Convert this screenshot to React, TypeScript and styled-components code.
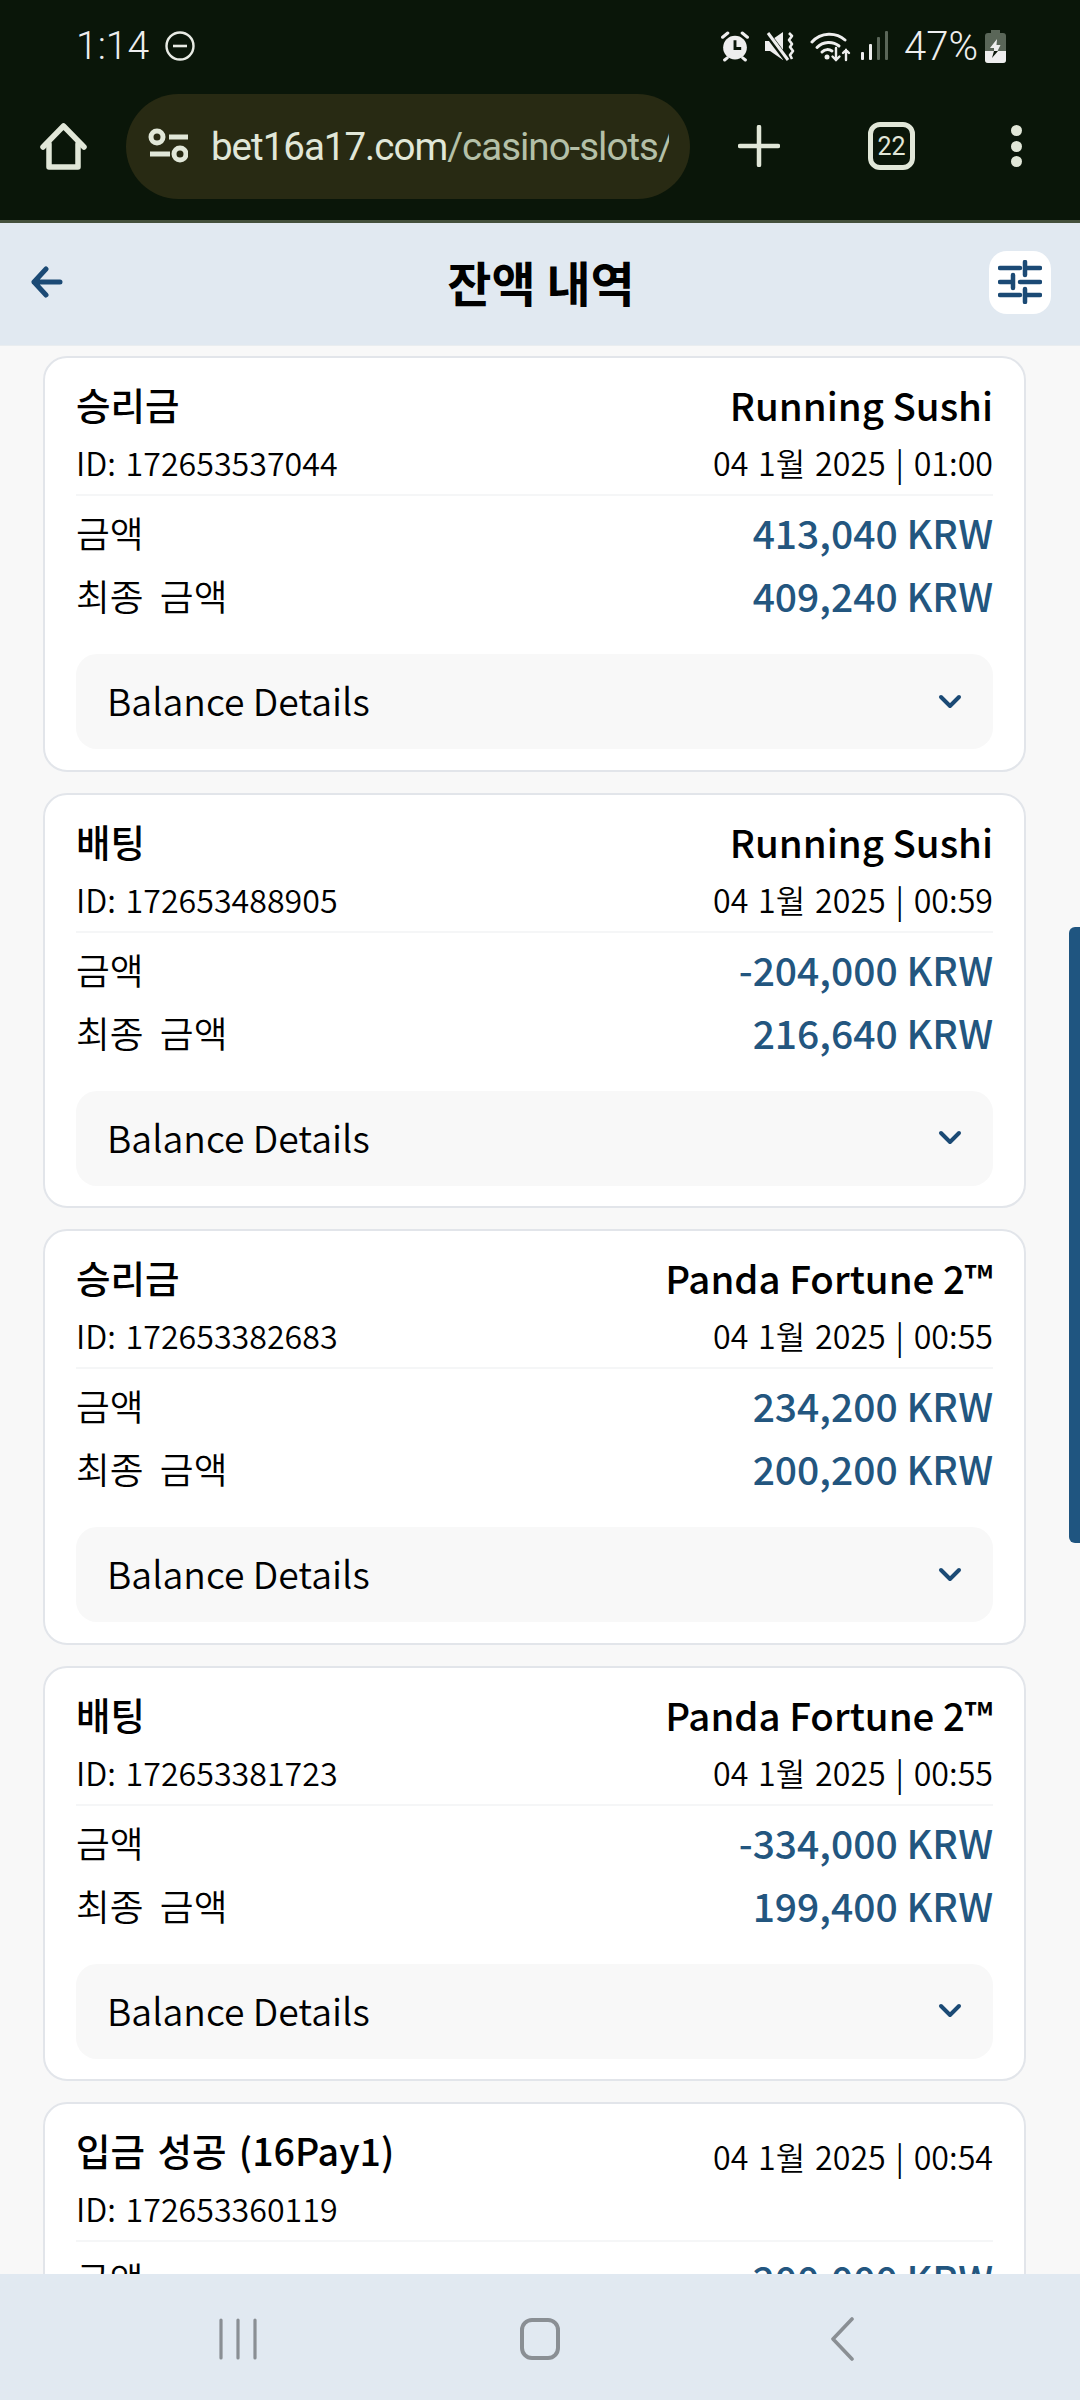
import React from 'react'
import styled, { createGlobalStyle } from 'styled-components'

const Navy = '#1b4a75'
const Chrome = '#e1e9f1'
const Ink = '#e1e7d8'

const entries = [
  { title: '승리금', game: 'Running Sushi', id: '172653537044', date: '04 1월 2025 | 01:00', amount: '413,040 KRW', total: '409,240 KRW' },
  { title: '배팅', game: 'Running Sushi', id: '172653488905', date: '04 1월 2025 | 00:59', amount: '-204,000 KRW', total: '216,640 KRW' },
  { title: '승리금', game: 'Panda Fortune 2™', id: '172653382683', date: '04 1월 2025 | 00:55', amount: '234,200 KRW', total: '200,200 KRW' },
  { title: '배팅', game: 'Panda Fortune 2™', id: '172653381723', date: '04 1월 2025 | 00:55', amount: '-334,000 KRW', total: '199,400 KRW' },
  { title: '입금 성공 (16Pay1)', id: '172653360119', date: '04 1월 2025 | 00:54', amount: '200,000 KRW', total: '200,000 KRW' },
]

export default function App() {
  return (
    <Page>
      <GlobalStyle />
      <TopBar>
        <StatusRow>
          <Clock>1:14</Clock>
          <DndIcon />
          <StatusIcons>
            <AlarmIcon />
            <MuteIcon />
            <WifiIcon />
            <SignalIcon />
            <BatteryText>47%</BatteryText>
            <BatteryIcon />
          </StatusIcons>
        </StatusRow>
        <BrowserRow>
          <HomeIcon />
          <UrlBar>
            <TuneIcon />
            <UrlText>
              bet16a17.com<UrlPath>/casino-slots/all</UrlPath>
            </UrlText>
          </UrlBar>
          <PlusIcon />
          <TabCount>22</TabCount>
          <MenuDots>
            <span />
            <span />
            <span />
          </MenuDots>
        </BrowserRow>
      </TopBar>

      <Header>
        <BackArrow />
        <Title>잔액 내역</Title>
        <FilterButton>
          <SlidersIcon />
        </FilterButton>
      </Header>

      <List>
        {entries.map(entry => (
          <Card key={entry.id}>
            <CardHead>
              <HeadTop>
                <EntryTitle>{entry.title}</EntryTitle>
                {entry.game ? <GameName>{entry.game}</GameName> : <Meta $shift>{entry.date}</Meta>}
              </HeadTop>
              <HeadBottom>
                <Meta>ID: {entry.id}</Meta>
                {entry.game && <Meta>{entry.date}</Meta>}
              </HeadBottom>
            </CardHead>
            <AmountRow>
              <Label>금액</Label>
              <Amount>{entry.amount}</Amount>
            </AmountRow>
            <AmountRow $second>
              <Label>최종 금액</Label>
              <Amount>{entry.total}</Amount>
            </AmountRow>
            <Details>
              <DetailsLabel>Balance Details</DetailsLabel>
              <ChevronIcon />
            </Details>
          </Card>
        ))}
        <ScrollThumb />
      </List>

      <NavBar>
        <NavSlot>
          <RecentsIcon />
        </NavSlot>
        <NavSlot>
          <NavHomeIcon />
        </NavSlot>
        <NavSlot>
          <NavBackIcon />
        </NavSlot>
      </NavBar>
    </Page>
  )
}

function DndIcon() {
  return (
    <DndSvg width="30" height="30" viewBox="0 0 30 30" fill="none" stroke="#e8ebe4">
      <circle cx="15" cy="15" r="13.5" strokeWidth="2.4" />
      <path d="M8 15h14" strokeWidth="2.6" />
    </DndSvg>
  )
}

function AlarmIcon() {
  return (
    <svg width="30" height="31" viewBox="0 0 28 30" fill="none">
      <circle cx="14" cy="16" r="11.5" fill="#eeeeee" />
      <path d="M14 9v8h6" stroke="#0a1609" strokeWidth="2.8" />
      <path d="M2 6l5-4M26 6l-5-4M4 28l2.5-2M24 28l-2.5-2" stroke="#eeeeee" strokeWidth="3" strokeLinecap="round" />
    </svg>
  )
}

function MuteIcon() {
  return (
    <svg width="30" height="30" viewBox="0 0 30 30" fill="none">
      <path d="M0 10h5L18 1v28L5 20H0z" fill="#eeeeee" />
      <path d="M1 1l21 28" stroke="#0a1609" strokeWidth="6" />
      <path d="M3 2l20 27" stroke="#eeeeee" strokeWidth="3" />
      <path d="M24 2l3 3-3 4 3 4-2 3 3 4-3 4 2 4" stroke="#eeeeee" strokeWidth="2.6" strokeLinejoin="round" />
    </svg>
  )
}

function WifiIcon() {
  return (
    <WifiSvg width="41" height="31" viewBox="0 0 41 31" fill="none" stroke="#eeeeee" strokeLinecap="round">
      <path d="M2 11C11 1 26 1 35 9" strokeWidth="3" />
      <path d="M7 16.500C13 10 23 10 29 15" strokeWidth="3" />
      <path d="M12 21c3-3 7-3 10-1" strokeWidth="3" />
      <circle cx="17" cy="26" r="2.500" fill="#eeeeee" stroke="none" />
      <path d="M26 17v12M22.500 25.500l3.500 3.500 3.500-3.500" strokeWidth="2.400" />
      <path d="M36 29v-10M33 22l3-3 3 3" strokeWidth="2.400" />
    </WifiSvg>
  )
}

function SignalIcon() {
  return (
    <svg width="28" height="30" viewBox="0 0 28 30">
      <rect x="1" y="21" width="3" height="8" rx="1" fill="#eeeeee" />
      <rect x="9" y="13" width="3" height="16" rx="1" fill="#eeeeee" />
      <rect x="17" y="6" width="3" height="23" rx="1" fill="#5a6658" />
      <rect x="25" y="0" width="3" height="29" rx="1" fill="#5a6658" />
    </svg>
  )
}

function BatteryIcon() {
  return (
    <svg width="21" height="33" viewBox="0 0 21 33">
      <path d="M6 0h9v3H6z" fill="#5a6658" />
      <rect x="0" y="3" width="21" height="30" rx="3" fill="#5a6658" />
      <path d="M0 21h21v9a3 3 0 0 1-3 3H3a3 3 0 0 1-3-3z" fill="#eeeeee" />
      <path d="M12 9l-7 9h4v3h3.500l3-6h-4z" fill="#eeeeee" />
      <path d="M9 21l-2 7 6-7z" fill="#0a1609" />
    </svg>
  )
}

function HomeIcon() {
  return (
    <svg width="47" height="48" viewBox="0 0 47 48" fill="none" stroke={Ink} strokeWidth="5.500" strokeLinejoin="round" strokeLinecap="round">
      <path d="M3 25L23.500 4 44 25" />
      <path d="M9 22v23h29V22" />
    </svg>
  )
}

function TuneIcon() {
  return (
    <svg width="40" height="36" viewBox="0 0 40 36" fill="none" stroke={Ink} strokeWidth="5">
      <circle cx="9" cy="9" r="6" />
      <path d="M21 9h19M2 26h20" />
      <circle cx="32" cy="26" r="6" />
    </svg>
  )
}

function PlusIcon() {
  return (
    <PlusSvg width="42" height="42" viewBox="0 0 42 42" fill="none" stroke={Ink} strokeWidth="4.500" strokeLinecap="round">
      <path d="M21 2v38M2 21h38" />
    </PlusSvg>
  )
}

function BackArrow() {
  return (
    <BackSvg width="32" height="32" viewBox="0 0 32 32" fill="none" stroke={Navy} strokeWidth="5" strokeLinecap="round" strokeLinejoin="round">
      <path d="M29 16H3M15 3L3 16l12 13" />
    </BackSvg>
  )
}

function SlidersIcon() {
  return (
    <svg width="44" height="44" viewBox="0 0 44 44" fill="none" stroke={Navy} strokeWidth="4.500" strokeLinecap="round">
      <path d="M2 8h20M29 8h13M27 2v13" />
      <path d="M2 22h12M22 22h20M15 15v13" />
      <path d="M2 35h20M29 35h13M27 29v13" />
    </svg>
  )
}

function ChevronIcon() {
  return (
    <svg width="24" height="16" viewBox="0 0 24 16" fill="none" stroke={Navy} strokeWidth="4" strokeLinecap="round" strokeLinejoin="round">
      <path d="M3 3l9 9 9-9" />
    </svg>
  )
}

function RecentsIcon() {
  return (
    <svg width="40" height="42" viewBox="0 0 40 42" fill="none" stroke="#8a8f94" strokeWidth="3.200" strokeLinecap="round">
      <path d="M3 2v38M20 2v38M37 2v38" />
    </svg>
  )
}

function NavHomeIcon() {
  return (
    <svg width="42" height="44" viewBox="0 0 42 44" fill="none" stroke="#8a8f94" strokeWidth="4">
      <rect x="3" y="3" width="36" height="38" rx="10" />
    </svg>
  )
}

function NavBackIcon() {
  return (
    <svg width="24" height="44" viewBox="0 0 24 44" fill="none" stroke="#8a8f94" strokeWidth="3.600" strokeLinecap="round" strokeLinejoin="round">
      <path d="M22 2L3 22l19 20" />
    </svg>
  )
}

const GlobalStyle = createGlobalStyle`
  html, body {
    margin: 0;
    padding: 0;
    background: #f8f8f8;
  }

  * {
    box-sizing: border-box;
  }
`

const Page = styled.div`
  display: flex;
  flex-direction: column;
  width: 1080px;
  height: 2400px;
  overflow: hidden;
  background: #f8f8f8;
  color: #000;
  font-family: 'Noto Sans CJK KR', 'Noto Sans', sans-serif;
`

const TopBar = styled.div`
  flex: none;
  height: 223px;
  border-bottom: 3px solid #44503c;
  background: #0a1609;
`

const StatusRow = styled.div`
  display: flex;
  align-items: center;
  height: 92px;
  padding: 0 74px 0 76px;
  color: #eeeeee;
  font-family: Roboto, sans-serif;
`

const Clock = styled.span`
  font-size: 39px;
  font-weight: 300;
`

const DndSvg = styled.svg`
  margin-left: 16px;
`

const StatusIcons = styled.div`
  display: flex;
  align-items: center;
  gap: 15px;
  margin-left: auto;
`

const WifiSvg = styled.svg`
  margin-right: -6px;
`

const BatteryText = styled.span`
  margin-left: 1px;
  margin-right: -8px;
  font-size: 40px;
  font-weight: 300;
`

const BrowserRow = styled.div`
  display: flex;
  align-items: center;
  height: 108px;
  padding: 0 0 0 40px;
  color: ${Ink};
  font-family: Roboto, sans-serif;
`

const UrlBar = styled.div`
  display: flex;
  align-items: center;
  width: 564px;
  height: 105px;
  margin-left: 39px;
  padding: 0 21px 0 22px;
  border-radius: 53px;
  background: #282a13;
`

const UrlText = styled.div`
  flex: 1;
  min-width: 0;
  margin-left: 23px;
  overflow: hidden;
  font-size: 38.500px;
  letter-spacing: -1px;
  white-space: nowrap;
`

const UrlPath = styled.span`
  color: #b4c0a8;
`

const PlusSvg = styled.svg`
  margin-left: 48px;
`

const TabCount = styled.div`
  display: flex;
  align-items: center;
  justify-content: center;
  width: 47px;
  height: 48px;
  margin-left: 88px;
  border: 5px solid ${Ink};
  border-radius: 12px;
  font-size: 25px;
`

const MenuDots = styled.div`
  display: flex;
  flex-direction: column;
  gap: 4.500px;
  margin-left: 96px;

  span {
    width: 11px;
    height: 11px;
    border-radius: 50%;
    background: ${Ink};
  }
`

const Header = styled.header`
  flex: none;
  display: grid;
  grid-template-columns: 1fr auto 1fr;
  align-items: center;
  height: 122px;
  padding: 0 29px 4px 31px;
  background: ${Chrome};
  box-shadow: 0 1px 0 #e9edf0;
`

const BackSvg = styled.svg`
  justify-self: start;
`

const Title = styled.h1`
  margin: 0;
  font-size: 48px;
  font-weight: 700;
  line-height: 1.2;
`

const FilterButton = styled.div`
  justify-self: end;
  display: flex;
  align-items: center;
  justify-content: center;
  width: 62px;
  height: 63px;
  border-radius: 18px;
  background: #fff;
`

const List = styled.main`
  position: relative;
  flex: 1;
  min-height: 0;
  display: flex;
  flex-direction: column;
  gap: 21px;
  padding: 11px 54px 0 43px;
  overflow: hidden;
`

const Card = styled.section`
  flex: none;
  height: 415.500px;
  padding: 19px 31px 0;
  border: 2px solid #e2e5ea;
  border-radius: 24px;
  background: #fff;
`

const CardHead = styled.div`
  height: 119px;
  border-bottom: 2px solid #f5f6f7;
`

const HeadTop = styled.div`
  display: flex;
  align-items: center;
  justify-content: space-between;
  height: 54px;
`

const HeadBottom = styled.div`
  display: flex;
  align-items: center;
  justify-content: space-between;
  height: 42px;
  margin-top: 10px;
`

const EntryTitle = styled.div`
  font-size: 37.500px;
  font-weight: 500;
  line-height: 54px;
  white-space: nowrap;
  word-spacing: 4px;
`

const GameName = styled(EntryTitle)`
  font-size: 38.400px;
  word-spacing: 0;
`

const Meta = styled.div<{ $shift?: boolean }>`
  font-size: 32.200px;
  font-weight: 350;
  line-height: 42px;
  white-space: nowrap;
  word-spacing: 2.500px;
  transform: ${p => (p.$shift ? 'translateY(6px)' : 'none')};
`

const AmountRow = styled.div<{ $second?: boolean }>`
  display: flex;
  align-items: center;
  justify-content: space-between;
  height: 52px;
  margin-top: ${p => (p.$second ? '11px' : '10px')};
`

const Label = styled.div`
  font-size: 36.750px;
  font-weight: 350;
  line-height: 52px;
  word-spacing: 8px;
`

const Amount = styled.div`
  color: #23567f;
  font-size: 39px;
  font-weight: 500;
  line-height: 52px;
`

const Details = styled.div`
  display: flex;
  align-items: center;
  justify-content: space-between;
  height: 95px;
  margin-top: 33px;
  padding: 0 31px;
  border-radius: 21px;
  background: #f8f8f8;
`

const DetailsLabel = styled.div`
  margin-top: -3px;
  font-size: 37.300px;
  font-weight: 350;
`

const ScrollThumb = styled.div`
  position: absolute;
  top: 582px;
  right: 0;
  width: 11px;
  height: 616px;
  border-radius: 6px 0 0 6px;
  background: #1f5580;
`

const NavBar = styled.nav`
  flex: none;
  display: grid;
  grid-template-columns: repeat(3, 302px);
  justify-content: center;
  align-items: center;
  height: 126px;
  padding-top: 4px;
  background: ${Chrome};
`

const NavSlot = styled.div`
  display: flex;
  justify-content: center;
`
